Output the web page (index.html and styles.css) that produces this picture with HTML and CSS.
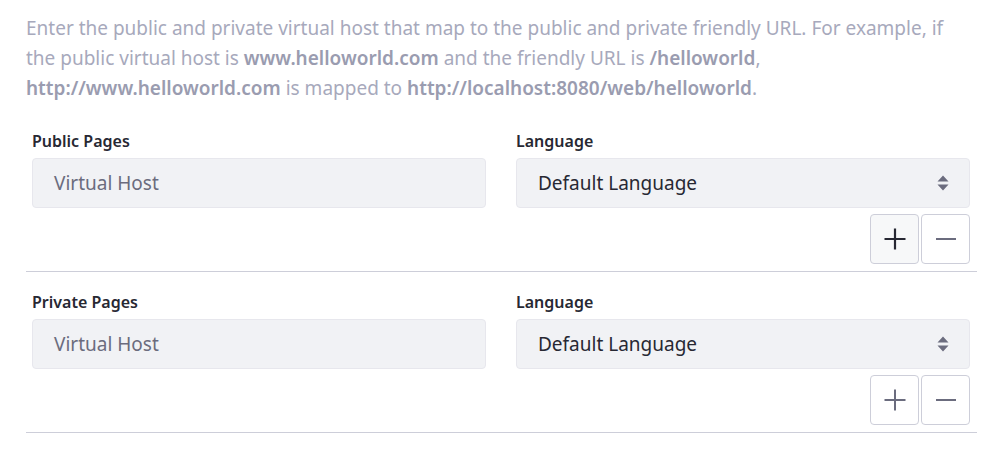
FILE: index.html
```html
<!DOCTYPE html>
<html>
<head>
<meta charset="utf-8">
<link rel="stylesheet" href="styles.css">
</head>
<body>
<div class="page">
  <p class="help">Enter the public and private virtual host that map to the public and private friendly URL. For example, if the public virtual host is <strong>www.helloworld.com</strong> and the friendly URL is <strong>/helloworld</strong>, <strong>http://www.helloworld.com</strong> is mapped to <strong>http://localhost:8080/web/helloworld</strong>.</p>

  <div class="section">
    <div class="row">
      <div class="field">
        <label class="label">Public Pages</label>
        <div class="input placeholder">Virtual Host</div>
      </div>
      <div class="field">
        <label class="label">Language</label>
        <div class="input select">
          <span>Default Language</span>
          <svg class="caret" width="12" height="16" viewBox="0 0 12 16"><path d="M6 0.5 L11.5 6.5 H0.5 Z M6 15.5 L11.5 9.5 H0.5 Z" fill="#6b6c7e"/></svg>
        </div>
        <div class="actions">
          <button class="btn active"><svg width="22" height="22" viewBox="0 0 22 22"><path d="M11 0.5 V21.5 M0.5 11 H21.5" stroke="#272833" stroke-width="2.2"/></svg></button>
          <button class="btn"><svg width="22" height="22" viewBox="0 0 22 22"><path d="M1 11 H21" stroke="#6b6c7e" stroke-width="2"/></svg></button>
        </div>
      </div>
    </div>
  </div>

  <div class="section">
    <div class="row">
      <div class="field">
        <label class="label">Private Pages</label>
        <div class="input placeholder">Virtual Host</div>
      </div>
      <div class="field">
        <label class="label">Language</label>
        <div class="input select">
          <span>Default Language</span>
          <svg class="caret" width="12" height="16" viewBox="0 0 12 16"><path d="M6 0.5 L11.5 6.5 H0.5 Z M6 15.5 L11.5 9.5 H0.5 Z" fill="#6b6c7e"/></svg>
        </div>
        <div class="actions">
          <button class="btn"><svg width="22" height="22" viewBox="0 0 22 22"><path d="M11 0.5 V21.5 M0.5 11 H21.5" stroke="#6b6c7e" stroke-width="2"/></svg></button>
          <button class="btn"><svg width="22" height="22" viewBox="0 0 22 22"><path d="M1 11 H21" stroke="#6b6c7e" stroke-width="2"/></svg></button>
        </div>
      </div>
    </div>
  </div>
</div>
</body>
</html>
```

FILE: styles.css
```css
* { box-sizing: border-box; }
html, body { margin: 0; padding: 0; background: #fff; }
body {
  font-family: "Noto Sans", "Open Sans", sans-serif;
  color: #272833;
}
.page {
  width: 951px;
  margin-left: 26px;
  padding-top: 13px;
}
.help {
  margin: 0 0 27px 0;
  max-width: 935px;
  font-size: 19px;
  line-height: 30px;
  color: #a7a9bc;
}
.help strong {
  font-weight: 600;
  color: #9a9cb0;
}
.section {
  border-bottom: 1px solid #cdced9;
  padding-bottom: 7px;
}
.section + .section { padding-top: 19px; }
.row {
  display: grid;
  grid-template-columns: 1fr 1fr;
  column-gap: 30px;
  padding: 0 7px 0 6px;
}
.label {
  display: block;
  font-size: 16px;
  font-weight: 600;
  line-height: 23px;
  margin-bottom: 5px;
  color: #272833;
}
.input {
  height: 50px;
  background: #f1f2f5;
  border: 1px solid #e7e7ed;
  border-radius: 4px;
  padding: 0 21px;
  display: flex;
  align-items: center;
  font-size: 19px;
}
.placeholder { color: #6b6c7e; }
.select {
  justify-content: space-between;
  color: #272833;
  padding-right: 20px;
}
.actions {
  display: flex;
  justify-content: flex-end;
  gap: 2px;
  margin-top: 6px;
}
.btn {
  width: 49px;
  height: 50px;
  border: 1px solid #cdced9;
  border-radius: 4px;
  background: #fff;
  padding: 0;
  display: flex;
  align-items: center;
  justify-content: center;
}
.btn.active { background: #f7f8f9; }
.btn svg { display: block; }
```
